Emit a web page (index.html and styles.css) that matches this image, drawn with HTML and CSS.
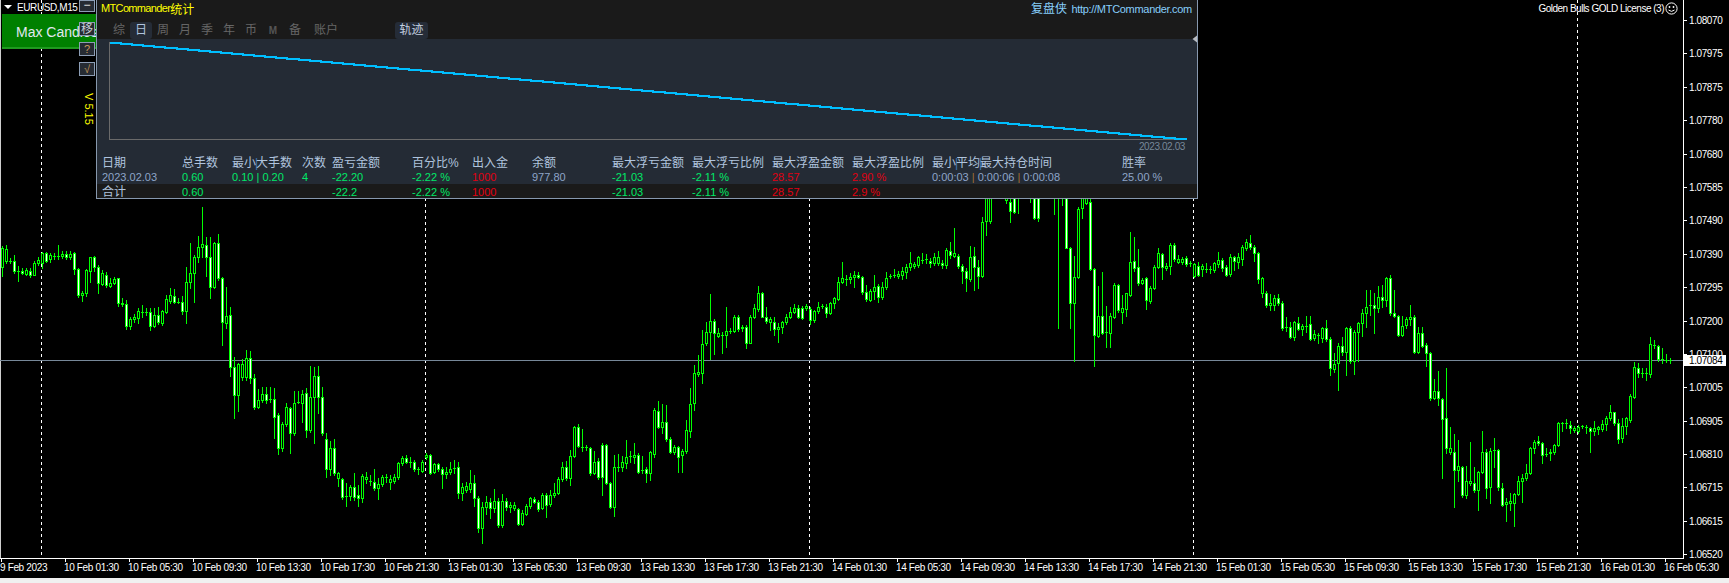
FILE: index.html
```html
<!DOCTYPE html>
<html lang="zh">
<head>
<meta charset="utf-8">
<title>EURUSD,M15</title>
<link rel="stylesheet" href="styles.css">
</head>
<body>
<div class="terminal">
  <div class="plot">
    <svg id="candles" class="candles" width="1683" height="558" viewBox="0 0 1683 558">
      <line class="edge" x1="0.5" y1="0" x2="0.5" y2="558"/>
      <line class="period" x1="41.5" y1="0" x2="41.5" y2="558"/>
      <line class="period" x1="425.5" y1="0" x2="425.5" y2="558"/>
      <line class="period" x1="809.5" y1="0" x2="809.5" y2="558"/>
      <line class="period" x1="1193.5" y1="0" x2="1193.5" y2="558"/>
      <line class="period" x1="1577.5" y1="0" x2="1577.5" y2="558"/>
      <line class="bid" x1="0" y1="360.5" x2="1683" y2="360.5"/>
    </svg>
    <div class="symbol"><span class="symbol-arrow"></span>EURUSD,M15</div>
    <div class="max-candles">Max Candles</div>
    <div class="tools">
      <div class="tool tool-min">−</div>
      <div class="tool">移</div>
      <div class="tool tool-warm">?</div>
      <div class="tool tool-warm">√</div>
    </div>
    <div class="version">V 5.15</div>
    <div class="license">Golden Bulls GOLD License (3)
      <svg class="smiley" width="13" height="13" viewBox="0 0 13 13">
        <circle cx="6.5" cy="6.5" r="5.6"/>
        <circle class="eye" cx="4.5" cy="5" r="0.9"/>
        <circle class="eye" cx="8.5" cy="5" r="0.9"/>
        <path d="M3.5 8 Q6.5 10.8 9.5 8"/>
      </svg>
    </div>

    <section class="panel">
      <header class="panel-title">
        <div class="brand"><span class="brand-latin">MTCommander</span><span class="brand-cjk">统计</span></div>
        <div class="site"><span class="site-cjk">复盘侠</span> <span class="site-url">http://MTCommander.com</span></div>
      </header>
      <nav class="tabs">
        <span class="tab">综</span>
        <span class="tab tab-on">日</span>
        <span class="tab">周</span>
        <span class="tab">月</span>
        <span class="tab">季</span>
        <span class="tab">年</span>
        <span class="tab">币</span>
        <span class="tab tab-small">M</span>
        <span class="tab">备</span>
        <span class="tab tab-wide">账户</span>
        <span class="tab tab-track">轨迹</span>
      </nav>
      <div class="stats">
        <svg class="equity" width="1100" height="112" viewBox="0 0 1100 112">
          <path class="equity-frame" d="M12.5 3V100.5H1088"/>
          <path id="equity-line" class="equity-line" d="M13 4H1088"/>
          <polygon class="equity-mark" points="1100,-3.5 1095.5,0 1100,3.5"/>
          <text class="equity-date" x="1088" y="111">2023.02.03</text>
        </svg>
        <div class="table">
          <div class="th">日期</div><div class="th">总手数</div><div class="th">最小<i class="bar">|</i>大手数</div><div class="th">次数</div><div class="th">盈亏金额</div><div class="th">百分比%</div><div class="th">出入金</div><div class="th">余额</div><div class="th">最大浮亏金额</div><div class="th">最大浮亏比例</div><div class="th">最大浮盈金额</div><div class="th">最大浮盈比例</div><div class="th">最小<i class="bar">|</i>平均<i class="bar">|</i>最大持仓时间</div><div class="th">胜率</div>
          <div class="td slate">2023.02.03</div><div class="td up">0.60</div><div class="td up">0.10 | 0.20</div><div class="td up">4</div><div class="td up">-22.20</div><div class="td up">-2.22 %</div><div class="td down">1000</div><div class="td slate">977.80</div><div class="td up">-21.03</div><div class="td up">-2.11 %</div><div class="td down">28.57</div><div class="td down">2.90 %</div><div class="td slate">0:00:03 <b class="sep">|</b> 0:00:06 <b class="sep">|</b> 0:00:08</div><div class="td slate">25.00 %</div>
        </div>
      </div>
      <div class="table totals">
        <div class="th">合计</div><div class="td up">0.60</div><div class="td"></div><div class="td"></div><div class="td up">-22.2</div><div class="td up">-2.22 %</div><div class="td down">1000</div><div class="td"></div><div class="td up">-21.03</div><div class="td up">-2.11 %</div><div class="td down">28.57</div><div class="td down">2.9 %</div><div class="td"></div><div class="td"></div>
      </div>
    </section>
  </div>

  <div class="price-axis">
    <span class="price">1.08070</span>
    <span class="price">1.07975</span>
    <span class="price">1.07875</span>
    <span class="price">1.07780</span>
    <span class="price">1.07680</span>
    <span class="price">1.07585</span>
    <span class="price">1.07490</span>
    <span class="price">1.07390</span>
    <span class="price">1.07295</span>
    <span class="price">1.07200</span>
    <span class="price">1.07100</span>
    <span class="price">1.07005</span>
    <span class="price">1.06905</span>
    <span class="price">1.06810</span>
    <span class="price">1.06715</span>
    <span class="price">1.06615</span>
    <span class="price">1.06520</span>
    <span class="price-now">1.07084</span>
  </div>

  <div class="time-axis">
    <span class="time">9 Feb 2023</span>
    <span class="time">10 Feb 01:30</span>
    <span class="time">10 Feb 05:30</span>
    <span class="time">10 Feb 09:30</span>
    <span class="time">10 Feb 13:30</span>
    <span class="time">10 Feb 17:30</span>
    <span class="time">10 Feb 21:30</span>
    <span class="time">13 Feb 01:30</span>
    <span class="time">13 Feb 05:30</span>
    <span class="time">13 Feb 09:30</span>
    <span class="time">13 Feb 13:30</span>
    <span class="time">13 Feb 17:30</span>
    <span class="time">13 Feb 21:30</span>
    <span class="time">14 Feb 01:30</span>
    <span class="time">14 Feb 05:30</span>
    <span class="time">14 Feb 09:30</span>
    <span class="time">14 Feb 13:30</span>
    <span class="time">14 Feb 17:30</span>
    <span class="time">14 Feb 21:30</span>
    <span class="time">15 Feb 01:30</span>
    <span class="time">15 Feb 05:30</span>
    <span class="time">15 Feb 09:30</span>
    <span class="time">15 Feb 13:30</span>
    <span class="time">15 Feb 17:30</span>
    <span class="time">15 Feb 21:30</span>
    <span class="time">16 Feb 01:30</span>
    <span class="time">16 Feb 05:30</span>
  </div>
  <div class="status-strip"></div>
</div>
<script src="app.js"></script>
</body>
</html>
```
FILE: styles.css
```css
* { box-sizing: border-box; }
html, body { margin: 0; padding: 0; background: #000; }
body { width: 1729px; height: 583px; overflow: hidden; font-family: "Liberation Sans", Arial, "Noto Sans CJK SC", sans-serif; }

.terminal {
  display: grid;
  grid-template-columns: 1683px 46px;
  grid-template-rows: 559px 19px 5px;
  width: 1729px;
  height: 583px;
  background: #000;
}

.plot { position: relative; border-bottom: 1px solid #fff; overflow: hidden; }
.candles { display: block; shape-rendering: crispEdges; }
.edge { stroke: #cfcfcf; stroke-width: 1; }
.period { stroke: #fff; stroke-width: 1; stroke-dasharray: 3 3; }
.bid { stroke: #778899; stroke-width: 1; }
.wick-green { fill: #00ff00; }
.body-white { fill: #fff; }
.body-black { fill: #000; }

.symbol {
  position: absolute;
  left: 4px;
  top: 1px;
  display: flex;
  align-items: center;
  height: 12px;
  color: #fff;
  font-size: 10px;
  letter-spacing: -0.4px;
}
.symbol-arrow {
  width: 0;
  height: 0;
  margin-right: 5px;
  border-left: 4px solid transparent;
  border-right: 4px solid transparent;
  border-top: 4px solid #fff;
}

.max-candles {
  position: absolute;
  left: 2px;
  top: 14px;
  width: 120px;
  height: 35px;
  padding-left: 14px;
  background: #008000;
  border-bottom: 2px solid #1f9a1f;
  color: #e2e8f0;
  font-size: 14px;
  line-height: 36px;
}

.tools {
  position: absolute;
  left: 79px;
  top: 0;
  display: flex;
  flex-direction: column;
  gap: 6px;
}
.tool {
  width: 16px;
  height: 14px;
  border: 1px solid #8c9db5;
  background: #262b33;
  color: #c8ced6;
  font-size: 12px;
  line-height: 12px;
  text-align: center;
}
.tool-min { height: 12px; margin-bottom: 4px; line-height: 9px; color: #e6e6e6; }
.tool-warm { color: #c89a58; font-size: 11px; }

.version {
  position: absolute;
  left: 83px;
  top: 93px;
  writing-mode: vertical-rl;
  color: #ffff00;
  font-size: 11px;
  line-height: 11px;
}

.license {
  position: absolute;
  right: 5px;
  top: 1px;
  display: flex;
  align-items: center;
  gap: 1px;
  height: 14px;
  color: #fff;
  font-size: 10px;
  letter-spacing: -0.5px;
  white-space: nowrap;
}
.smiley { shape-rendering: geometricPrecision; }
.smiley circle, .smiley path { fill: none; stroke: #fff; stroke-width: 1; }
.smiley .eye { fill: #fff; stroke: none; }

.panel {
  position: absolute;
  left: 96px;
  top: 0;
  width: 1102px;
  height: 199px;
  display: flex;
  flex-direction: column;
  background: #1a1a1a;
  border: 1px solid #8798ae;
  border-top: 0;
  overflow: hidden;
}
.panel-title {
  display: flex;
  justify-content: space-between;
  align-items: center;
  flex: none;
  height: 17px;
  padding: 0 5px 1px 4px;
}
.brand { display: flex; align-items: center; color: #ffff00; }
.brand-latin { font-size: 11px; letter-spacing: -0.65px; }
.brand-cjk { font-size: 12px; }
.site { color: #87cefa; white-space: nowrap; }
.site-cjk { font-size: 12px; }
.site-url { font-size: 11px; letter-spacing: -0.3px; }

.tabs {
  display: flex;
  flex: none;
  height: 17px;
  margin-top: 5px;
  margin-bottom: 0;
  padding-left: 11px;
  font-size: 12px;
  line-height: 17px;
  color: #666;
}
.tabs .tab { width: 22px; text-align: center; }
.tab-on { color: #b0c4de; background: #252c37; border-radius: 3px; }
.tabs .tab-small { font-size: 10px; font-weight: bold; color: #555; }
.tabs .tab-wide { width: 40px; }
.tabs .tab-track {
  width: 33px;
  margin-left: 49px;
  color: #c4d0e0;
  background: #252c37;
  border-radius: 3px;
}

.stats { flex: none; height: 145px; background: #242b35; }
.equity { display: block; overflow: visible; }
.equity-frame { fill: none; stroke: #6a6a6a; stroke-width: 1; shape-rendering: crispEdges; }
.equity-line { fill: none; stroke: #00bfff; stroke-width: 2; shape-rendering: crispEdges; }
.equity-mark { fill: #b8bcc2; }
.equity-date { fill: #778899; font-size: 10px; letter-spacing: -0.4px; text-anchor: end; }

.table {
  display: grid;
  grid-template-columns: 80px 50px 70px 30px 80px 60px 60px 80px 80px 80px 80px 80px 190px 1fr;
  padding-top: 6px;
  padding-left: 5px;
}
.th, .td { white-space: nowrap; height: 13px; line-height: 13px; }
.td { height: 14px; line-height: 14px; }
.th { color: #b0c4de; font-size: 12px; }
.td { font-size: 11px; }
.bar { display: inline-block; width: 1px; margin-left: -1px; margin-right: 0; font-style: normal; color: #3f76b8; font-size: 12px; }
.sep { font-weight: normal; color: #a26f33; }
.slate { color: #8ea5c8; }
.up { color: #00e868; }
.down { color: #e00012; }
.totals { flex: none; height: 14px; padding-top: 1px; overflow: hidden; }
.totals .th { height: 14px; line-height: 14px; }

.price-axis {
  position: relative;
  grid-row: 1;
  grid-column: 2;
  display: flex;
  flex-direction: column;
  padding-top: 4px;
  height: 559px;
  border-left: 1px solid #fff;
  overflow: hidden;
}
.price {
  position: relative;
  flex: none;
  height: 33.4px;
  padding-left: 5px;
  color: #fff;
  font-size: 10px;
  letter-spacing: -0.4px;
  line-height: 33.4px;
}
.price::before {
  content: "";
  position: absolute;
  left: 0;
  top: 16px;
  width: 3px;
  height: 1px;
  background: #fff;
}
.price-now {
  position: absolute;
  left: 0;
  top: 355px;
  width: 42px;
  height: 11px;
  padding-left: 5px;
  background: #fff;
  color: #000;
  font-size: 10px;
  letter-spacing: -0.4px;
  line-height: 11px;
}

.time-axis {
  grid-column: 1 / 3;
  grid-row: 2;
  display: flex;
  padding-left: 1px;
}
.time {
  position: relative;
  flex: none;
  width: 64px;
  padding-top: 3px;
  color: #fff;
  font-size: 10px;
  letter-spacing: -0.35px;
  line-height: 12px;
  text-indent: -1px;
  white-space: nowrap;
}
.time::before {
  content: "";
  position: absolute;
  left: 0;
  top: 0;
  width: 1px;
  height: 3px;
  background: #fff;
}
.status-strip { grid-column: 1 / 3; grid-row: 3; background: #f0f0f0; }
```
FILE: app.js
```javascript
// Each candle: [x in crop, body top, body bottom, down(white)=1, wick high, wick low]
// y values are crop units: page y = 200 + v / 3
var A = [[5,145,200,0,138,228],[15,148,182,0,135,190],[25,182,182,0,175,190],[35,182,213,1,165,218],[45,213,213,0,198,242],[55,213,218,1,205,222],[65,210,222,0,203,226],[75,212,225,1,205,230],[85,190,224,0,183,226],[97,180,188,0],[108,160,190,0,155,205],[118,160,183,1,156,187],[130,166,178,0],[140,168,168,0,160,178],[150,168,168,0,135,176],[160,162,167,0],[170,162,170,1],[181,162,170,0],[192,160,208,1,156,222],[203,208,285,1,205,292],[213,278,285,0,272,302],[223,210,278,0,207,288],[233,172,212,0,170,245],[244,172,200,1,168,212],[255,202,250,1,195,278],[265,220,252,0,210,256],[276,224,256,1,215,262],[286,248,258,0,235,262],[297,238,248,0,230,252],[307,235,308,1,233,318],[318,308,313,1,295,318],[328,313,378,1,300,386],[338,357,378,0,350,386],[348,352,357,0,342,365],[358,333,353,0,325,368],[369,335,335,0,316,352],[379,335,335,0,325,345],[390,335,378,1,325,390],[400,344,378,0,325,382],[411,344,366,1,322,372],[421,334,370,0,330,374],[432,298,335,0,285,340],[442,286,302,0,265,310],[453,287,305,1,268,310],[463,305,305,0,295,310],[473,305,332,1,288,342],[485,245,332,0,202,370],[495,220,245,0,128,265],[505,170,220,0,165,305],[516,142,172,0,108,185],[526,133,142,0,22,172],[537,135,172,1,110,228],[548,172,260,1,110,293],[558,130,260,0,125,265],[568,130,235,1,102,240],[579,235,365,1,232,435],[589,348,368,0,262,385],[600,345,500,1,322,528],[610,500,585,1,472,653],[621,492,585,0,488,632],[631,492,530,0,478,540],[641,475,530,0,450,540],[651,475,533,1,452,548],[662,533,622,1,522,628],[672,600,622,0,568,625],[683,582,600,0,562,605],[694,582,600,1,560,608],[704,598,598,0,562,605],[715,598,650,1,565,715],[725,645,743,1,640,762],[736,672,743,0,665,752],[746,622,672,0,610,678],[757,625,700,1,620,758],[767,610,700,0,572,705],[778,605,605,0,572,610],[788,582,608,0,570,665],[798,580,690,1,565,710],[809,592,690,0,497,695],[819,527,592,0,500,730],[830,527,592,1,497,640],[840,592,700,1,560,705],[851,718,808,1,700,830],[861,745,808,0,722,825],[872,745,820,1,718,825],[882,820,835,0,815,858],[892,838,892,1,835,898],[903,888,888,0,848,918],[913,862,888,0,855,900],[924,862,890,1,820,900],[934,885,895,1,855,918],[945,828,895,0,822,905],[955,832,838,0,815,850],[965,842,842,0,825,855],[976,845,865,1,808,870],[986,852,865,0,835,896],[997,832,852,0,825,858],[1007,832,832,0,822,845],[1018,838,845,0,825,868],[1028,832,842,0,822,848],[1039,790,832,0,785,838],[1049,775,788,0,768,796],[1060,775,785,1,765,790],[1070,785,785,0,770,800],[1081,787,808,1,780,812],[1091,808,808,0,802,822],[1101,786,812,0,780,816],[1112,765,770,0,760,778],[1122,765,818,1,762,822],[1133,792,815,0,788,820],[1143,792,808,1,788,812],[1154,808,822,1,802,864],[1164,815,822,0,800,835],[1175,808,815,0,785,822],[1185,805,805,0,780,820],[1195,802,878,1,785,895],[1206,862,878,0,848,900],[1216,858,870,0,845,875],[1227,850,868,0,810,875],[1237,850,893,1,825,918],[1248,893,985,1,888,995],[1258,920,985,0,905,1028],[1269,907,920,0,888,942],[1279,907,925,1,895,955],[1290,902,925,0,868,935],[1300,902,975,1,895,980],[1311,902,975,0,882,980],[1321,902,922,1,895,930],[1331,914,922,0,905,935],[1342,914,925,0,905,930],[1352,928,972,1,925,975],[1363,938,972,0,930,975],[1373,918,942,0,912,945],[1384,895,918,0,890,925],[1394,896,905,1,892,910],[1405,906,926,1,900,932],[1415,885,925,0,880,928],[1426,885,915,1,878,950],[1436,885,912,0,870,918],[1447,878,885,0,850,890],[1457,838,878,0,830,882],[1467,802,838,0,785,842],[1478,802,835,1,782,840],[1488,767,835,0,750,855],[1498,682,767,0,678,770],[1509,680,738,1,672,742],[1519,740,740,0,688,752],[1530,742,742,0,735,750],[1540,745,818,1,742,825],[1551,785,818,0,752,822],[1561,782,832,1,775,838]];
var B = [[3,735,830,1,730,885],[14,735,848,1,732,852],[25,848,920,1,845,925],[35,802,920,0,765,948],[45,802,802,0,762,812],[56,785,800,0,768,812],[66,772,790,0,720,805],[77,768,768,0,752,785],[87,765,772,0,730,790],[98,765,815,1,760,818],[108,810,810,0,768,818],[119,808,818,1,802,845],[129,757,818,0,752,840],[140,630,762,0,625,770],[150,634,680,1,603,685],[161,665,680,0,612,698],[171,665,716,1,615,722],[182,716,755,1,710,760],[192,742,755,0,735,762],[203,742,770,1,738,815],[213,754,766,0,748,815],[224,690,754,0,660,758],[234,612,692,0,565,710],[245,518,610,0,495,630],[255,515,522,0,465,528],[265,433,518,0,390,548],[276,397,430,0,365,435],[286,363,397,0,282,478],[297,363,400,1,358,462],[307,400,408,0,385,412],[318,405,405,0,395,460],[328,394,406,0,322,440],[338,393,393,0,385,400],[349,352,392,0,345,395],[359,352,388,1,345,392],[370,380,385,0,375,392],[380,380,428,1,375,445],[391,350,428,0,345,430],[401,325,350,0,312,355],[412,280,328,0,258,332],[422,280,350,1,275,352],[433,350,362,1,322,368],[443,358,365,0,350,390],[453,365,388,1,350,405],[464,382,388,0,370,425],[474,367,382,0,362,400],[485,350,367,0,342,372],[495,335,350,0,322,355],[505,325,335,0,312,340],[516,325,350,1,315,355],[527,325,355,1,318,358],[537,317,325,0,312,330],[548,327,360,1,322,372],[558,333,360,0,330,365],[568,320,333,0,305,338],[579,318,318,0,312,325],[589,320,340,1,312,350],[600,308,338,0,305,342],[610,295,308,0,290,325],[621,247,298,0,232,300],[631,233,247,0,187,250],[641,237,237,0,225,255],[652,232,238,0,218,250],[662,225,232,0,212,262],[672,225,232,1,215,235],[683,232,275,1,228,282],[693,275,298,1,255,302],[704,272,300,0,268,302],[714,260,272,0,225,298],[725,258,290,1,252,305],[735,262,290,0,245,298],[746,235,262,0,215,268],[756,227,227,0,222,235],[767,225,225,0,208,232],[777,222,228,0,212,235],[788,212,225,0,200,238],[798,200,215,0,192,235],[809,190,200,0,155,210],[819,192,197,0,185,205],[830,172,195,0,168,200],[840,180,180,0,158,190],[851,178,178,0,162,188],[861,182,190,1,175,200],[872,170,190,0,158,195],[882,172,190,0,152,195],[892,188,195,1,180,205],[903,150,195,0,145,205],[913,152,165,1,125,175],[924,160,168,0,85,172],[934,168,198,1,162,205],[945,197,213,1,192,250],[955,213,235,1,205,272],[965,170,238,0,138,242],[976,167,202,1,140,270],[986,202,228,1,180,265],[997,65,228,0,50,232],[1007,-50,62,0,-60,105],[1018,-50,62,0,-60,68],[1060,-30,0,0,-50,8],[1070,5,32,1,-20,65],[1081,-10,35,1,-30,38],[1091,-10,-8,0,-30,40],[1122,-30,-20,0,-40,5],[1133,-20,55,1,-30,58],[1143,-20,55,1,-30,62],[1185,-30,-20,0,-40,42],[1195,-60,-50,1,-70,385],[1206,-30,-20,0,-40,15],[1216,-50,143,1,-60,145],[1227,145,308,1,140,385],[1237,232,308,0,168,482],[1248,28,232,0,22,235],[1258,-5,25,0,-20,55],[1269,-5,8,0,-20,12],[1279,5,208,1,-10,210],[1290,208,405,1,205,497],[1300,348,408,0,258,412],[1311,348,398,1,217,402],[1321,397,397,0,317,440],[1331,347,398,0,340,440],[1342,255,350,0,250,355],[1352,255,330,1,252,335],[1363,325,335,0,285,368],[1373,280,327,0,278,348],[1384,185,285,0,97,288],[1394,183,205,1,110,212],[1405,202,248,1,148,255],[1415,240,248,0,235,252],[1426,235,300,1,230,327],[1436,265,302,0,258,308],[1447,202,265,0,195,268],[1457,160,200,0,145,205],[1467,163,202,1,158,237],[1478,197,203,0,190,210],[1488,135,197,0,130,222],[1498,135,178,1,130,182],[1509,178,185,0,165,190],[1519,177,185,0,170,192],[1530,175,192,1,168,198],[1540,190,190,0,182,198],[1551,192,228,0,188,232],[1561,198,225,1,185,228]];
var C = [[4,198,208,0,192,228],[16,208,208,0,190,215],[28,208,208,0,198,218],[40,190,210,0,185,215],[51,180,192,0,155,200],[63,180,205,1,175,212],[75,202,224,1,195,228],[87,172,222,0,162,228],[99,172,182,1,168,210],[111,172,185,0,160,205],[123,142,178,0,135,195],[135,126,143,0,118,150],[147,130,142,1,105,148],[158,140,158,1,135,182],[170,158,236,1,155,248],[182,234,278,0,230,292],[194,278,314,1,272,322],[206,310,314,0,282,330],[217,295,314,0,285,330],[229,295,308,1,282,315],[241,310,384,1,304,390],[253,380,380,0,350,392],[265,380,410,1,365,414],[277,367,410,0,362,420],[289,370,386,1,350,390],[300,378,386,0,372,405],[312,377,377,0,348,395],[324,373,416,1,348,420],[336,403,415,0,390,420],[348,405,405,0,398,428],[360,385,413,0,380,425],[372,385,418,1,360,422],[384,416,505,1,412,525],[396,492,506,0,458,515],[408,439,490,0,428,570],[420,438,457,1,412,465],[432,385,457,0,380,525],[444,385,484,1,378,488],[455,397,482,0,390,522],[467,370,397,0,366,482],[479,340,370,0,328,408],[491,320,338,0,270,380],[503,316,316,0,270,345],[515,316,325,1,280,400],[526,290,325,0,258,335],[538,290,300,1,255,320],[550,233,300,0,230,318],[562,235,340,1,225,345],[574,340,348,1,270,352],[586,348,405,1,345,408],[597,377,405,0,348,408],[609,358,375,0,350,385],[621,352,358,0,315,375],[633,350,455,1,345,460],[645,400,455,0,380,460],[657,400,438,1,380,442],[669,435,458,1,430,498],[680,458,595,1,455,600],[692,572,595,0,538,598],[704,572,595,1,513,615],[716,598,658,1,595,835],[728,655,745,1,505,760],[740,743,757,0,682,762],[752,757,810,1,702,922],[764,798,810,0,720,842],[776,802,885,1,798,890],[788,844,885,0,798,895],[799,842,850,0,727,855],[811,850,870,1,800,875],[823,816,870,0,812,930],[835,755,816,0,693,820],[847,755,865,1,748,895],[859,752,862,0,745,908],[871,750,750,0,715,800],[882,750,862,1,748,870],[894,865,916,1,850,918],[906,905,912,0,895,962],[918,902,910,0,880,930],[930,882,908,0,878,977],[942,842,882,0,828,885],[954,835,842,0,822,905],[965,818,835,0,792,840],[977,745,820,0,742,822],[989,725,745,0,720,760],[1001,722,730,1,708,735],[1013,730,765,1,726,790],[1025,762,762,0,745,768],[1037,755,760,0,748,780],[1048,735,755,0,732,762],[1060,668,735,0,665,738],[1072,670,670,0,665,692],[1084,670,670,0,658,685],[1096,675,685,1,662,698],[1108,685,690,0,678,695],[1119,682,693,0,675,700],[1131,678,678,0,675,684],[1143,680,680,0,675,700],[1155,684,694,1,680,755],[1167,684,693,0,662,705],[1179,682,688,0,678,702],[1191,672,688,0,660,692],[1202,655,672,0,648,690],[1214,637,655,0,615,660],[1226,637,668,1,635,675],[1238,668,718,1,658,728],[1250,678,715,0,655,725],[1262,655,678,0,650,702],[1274,587,660,0,582,665],[1286,502,590,0,485,595],[1297,503,518,1,488,532],[1309,518,518,0,505,530],[1321,520,520,0,505,540],[1333,433,522,0,410,532],[1345,435,435,0,420,445],[1357,438,478,1,435,482],[1369,476,476,0,445,488],[1381,479,479,0,462,486],[1392,480,480,0,473,488]];

var green = '', white = '', black = '';
function rect(x, y, w, h) { return 'M' + x + ' ' + y + 'h' + w + 'v' + h + 'h' + (-w) + 'z'; }
function add(row, sx, ox) {
  var i = Math.round((ox + row[0] / sx - 2) / 4);
  var x = 2 + 4 * i;
  function py(v) { return Math.round(200 + v / 3); }
  var t = py(row[1]), b = py(row[2]);
  var hi = py(row[4] === undefined ? row[1] - 8 : row[4]);
  var lo = py(row[5] === undefined ? row[2] + 8 : row[5]);
  if (lo > hi) green += rect(x, hi, 1, lo - hi + 1);
  if (b - t < 1) { green += rect(x - 1, t, 3, 1); return; }
  green += rect(x - 1, t, 3, b - t + 1);
  if (b - t >= 2) {
    if (row[3]) white += rect(x, t + 1, 1, b - t - 1);
    else black += rect(x, t + 1, 1, b - t - 1);
  }
}
A.forEach(function (r) { add(r, 2.613, 0); });
B.forEach(function (r) { add(r, 2.613, 600); });
C.forEach(function (r) { add(r, 2.957, 1200); });

var svg = document.getElementById('candles');
[['wick-green', green], ['body-black', black], ['body-white', white]].forEach(function (p) {
  var el = document.createElementNS('http://www.w3.org/2000/svg', 'path');
  el.setAttribute('class', p[0]);
  el.setAttribute('d', p[1]);
  svg.appendChild(el);
});

var stairs = 'M13 4';
for (var s = 1; s <= 97; s++) {
  stairs += 'H' + Math.round(13 + s * 11.09) + 'V' + (4 + s);
}
document.getElementById('equity-line').setAttribute('d', stairs);
```
